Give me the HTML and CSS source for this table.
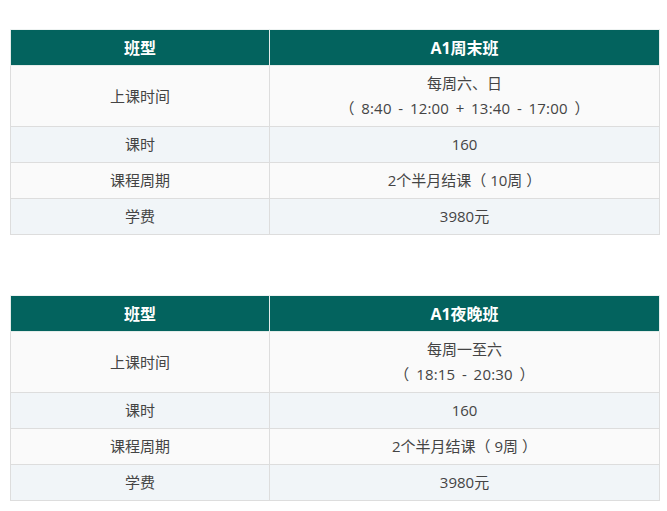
FILE: index.html
```html
<!DOCTYPE html>
<html lang="zh">
<head>
<meta charset="utf-8">
<link rel="stylesheet" href="styles.css">
</head>
<body>
<div class="page">
  <table class="course">
    <tr class="head"><th class="c1">班型</th><th>A1周末班</th></tr>
    <tr class="odd tall"><td class="c1">上课时间</td><td>每周六、日<br><span class="time">（ 8:40 - 12:00 + 13:40 - 17:00 ）</span></td></tr>
    <tr class="even"><td class="c1">课时</td><td>160</td></tr>
    <tr class="odd"><td class="c1">课程周期</td><td>2个半月结课（ 10周 ）</td></tr>
    <tr class="even"><td class="c1">学费</td><td>3980元</td></tr>
  </table>
  <table class="course">
    <tr class="head"><th class="c1">班型</th><th>A1夜晚班</th></tr>
    <tr class="odd tall"><td class="c1">上课时间</td><td>每周一至六<br><span class="time">（ 18:15 - 20:30 ）</span></td></tr>
    <tr class="even"><td class="c1">课时</td><td>160</td></tr>
    <tr class="odd"><td class="c1">课程周期</td><td>2个半月结课（ 9周 ）</td></tr>
    <tr class="even"><td class="c1">学费</td><td>3980元</td></tr>
  </table>
</div>
</body>
</html>
```
FILE: styles.css
```css
html, body {
  margin: 0;
  padding: 0;
  background: #ffffff;
}
.page {
  padding: 29px 0 0 10px;
  display: flex;
  flex-direction: column;
  gap: 60px;
  font-family: "Open Sans", "Noto Sans CJK SC", sans-serif;
}
.course {
  width: 650px;
  border-collapse: collapse;
  border: 1px solid #dedede;
  table-layout: fixed;
}
.course th, .course td {
  padding: 0;
  text-align: center;
  vertical-align: middle;
}
.course .c1 {
  width: 258px;
}
.head th {
  height: 35px;
  background: #03635e;
  color: #ffffff;
  font-size: 16px;
  line-height: 22px;
  font-weight: bold;
  border: 1px solid #e4ecea;
  border-top-color: #eef3f2;
}
.course td {
  height: 35px;
  font-size: 15px;
  line-height: 25px;
  color: #444444;
  border: 1px solid #dddddd;
}
.time {
  word-spacing: 2.5px;
  letter-spacing: 0.2px;
}
.tall td {
  height: 60px;
}
.odd td {
  background: #fafafa;
}
.even td {
  background: #f1f5f8;
}
```
